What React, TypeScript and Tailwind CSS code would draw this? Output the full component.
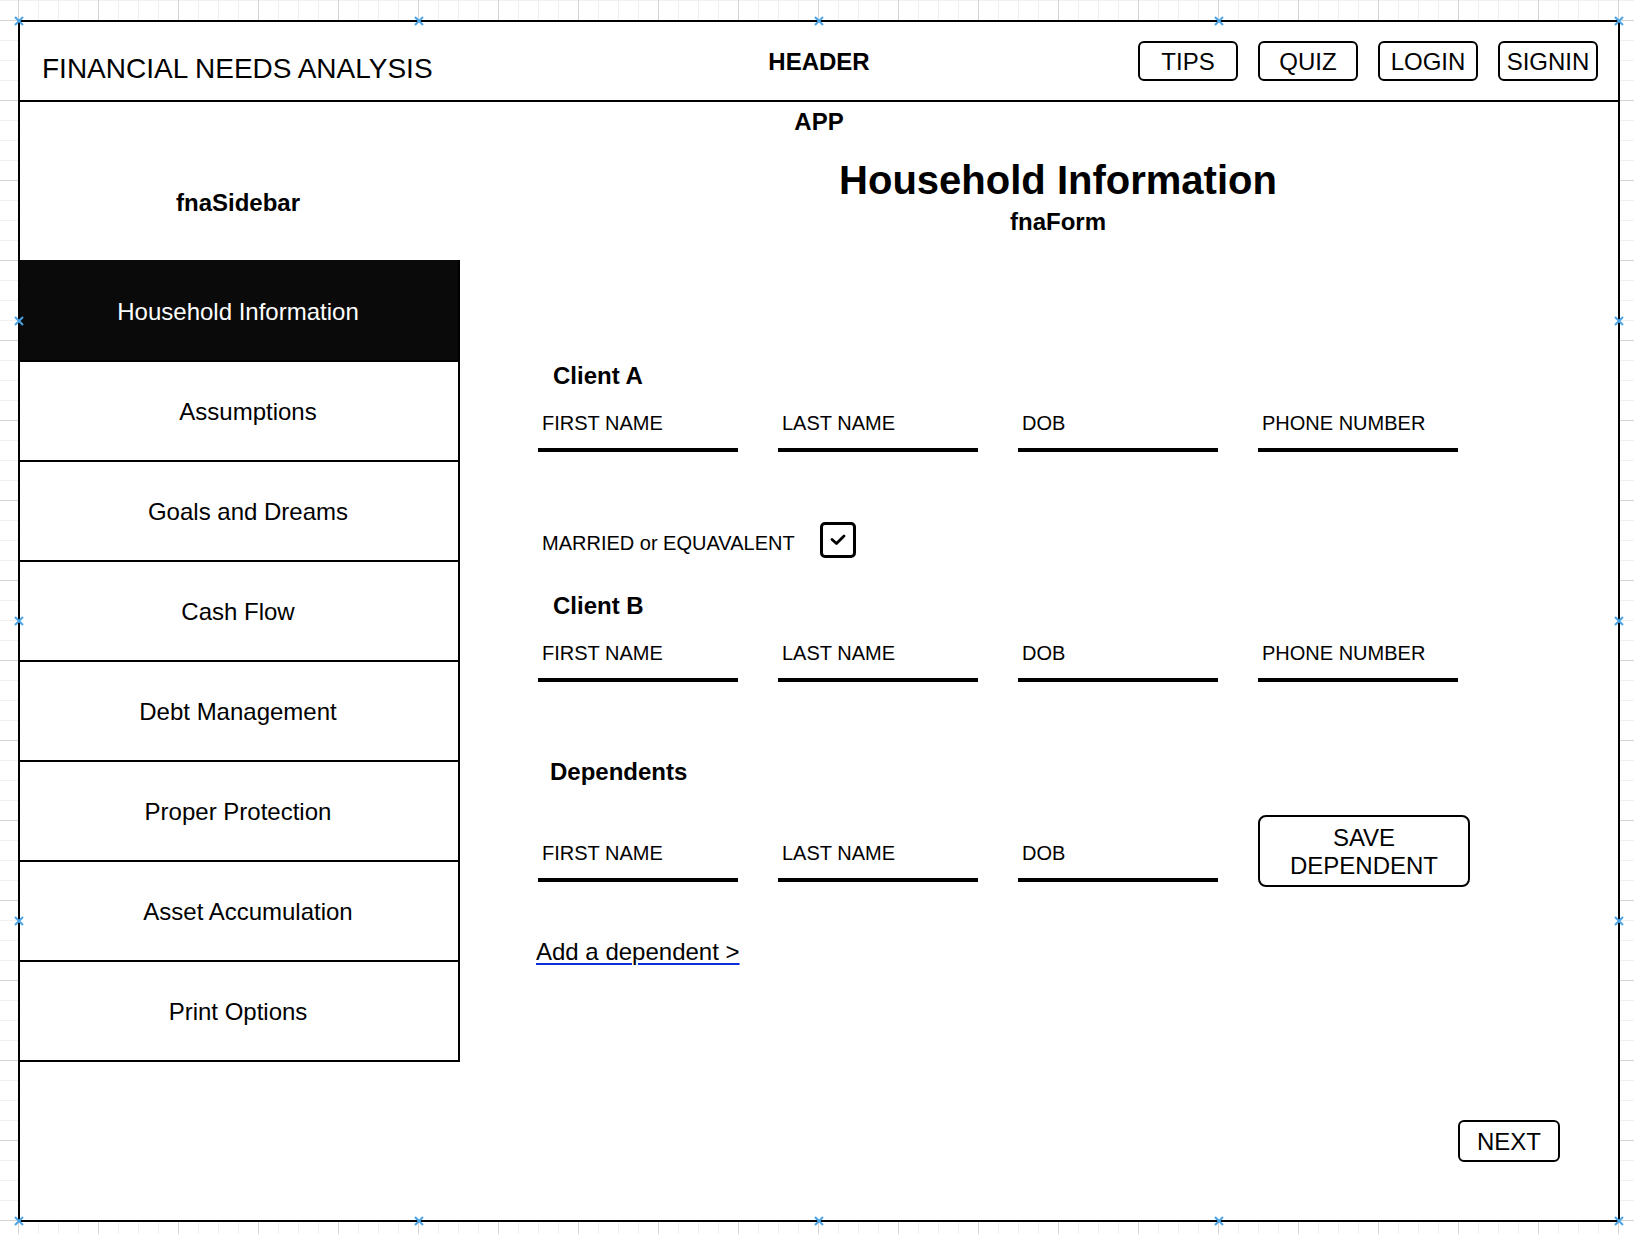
import React, { FC } from 'react';

const NAV_ITEMS = [
  { label: 'Household Information', active: true },
  { label: 'Assumptions', shift: true },
  { label: 'Goals and Dreams', shift: true },
  { label: 'Cash Flow' },
  { label: 'Debt Management' },
  { label: 'Proper Protection' },
  { label: 'Asset Accumulation', shift: true },
  { label: 'Print Options' },
];

const MARK_X = [-1, 399, 799, 1199, 1599];
const MARK_Y = [-1, 299, 599, 899, 1199];

// draw.io style connection markers around the frame
const markers: { x: number; y: number }[] = [];
MARK_X.forEach((x) => {
  markers.push({ x, y: -1 });
  markers.push({ x, y: 1199 });
});
MARK_Y.slice(1, 4).forEach((y) => {
  markers.push({ x: -1, y });
  markers.push({ x: 1599, y });
});

const Marker: FC<{ x: number; y: number }> = ({ x, y }) => (
  <svg
    className="absolute pointer-events-none"
    style={{ left: x - 5, top: y - 5 }}
    width="10"
    height="10"
    viewBox="0 0 10 10"
  >
    <path d="M1 1L9 9M9 1L1 9" stroke="#4ba3e3" strokeWidth="2" />
  </svg>
);

const Field: FC<{ label: string }> = ({ label }) => (
  <div className="w-[200px] border-b-4 border-black pb-[13px] pl-[4px]">
    <div className="text-[20px] leading-[24px]">{label}</div>
  </div>
);

const FieldRow: FC<{ labels: string[] }> = ({ labels }) => (
  <div className="flex gap-[40px]">
    {labels.map((l) => (
      <Field key={l} label={l} />
    ))}
  </div>
);

const HeaderButton: FC<{ label: string }> = ({ label }) => (
  <button className="w-[100px] h-[40px] border-2 border-black rounded-[6px] text-[24px] leading-none flex items-center justify-center pt-[2px]">
    {label}
  </button>
);

const App: FC = () => {
  return (
    <div className="min-h-screen w-full pt-[20px] pl-[18px] pb-[12px] bg-white bg-[linear-gradient(to_right,#d4d4d4_1px,transparent_1px),linear-gradient(to_bottom,#d4d4d4_1px,transparent_1px),linear-gradient(to_right,#f0f0f0_1px,transparent_1px),linear-gradient(to_bottom,#f0f0f0_1px,transparent_1px)] bg-[size:80px_80px,80px_80px,20px_20px,20px_20px] bg-[position:18px_20px,18px_20px,18px_20px,18px_20px] font-['Liberation_Sans',Arial,Helvetica,sans-serif] text-black">
      <div className="relative w-[1602px] h-[1202px] border-2 border-black bg-white flex flex-col">
        {/* header */}
        <div className="h-[80px] shrink-0 border-b-2 border-black grid grid-cols-[1fr_auto_1fr] items-center">
          <div className="pl-[22px] mt-[16px] text-[28px] leading-[32px]">FINANCIAL NEEDS ANALYSIS</div>
          <div className="mt-[2px] text-[24px] leading-[28px] font-bold">HEADER</div>
          <div className="flex justify-end gap-[20px] pr-[20px]">
            <HeaderButton label="TIPS" />
            <HeaderButton label="QUIZ" />
            <HeaderButton label="LOGIN" />
            <HeaderButton label="SIGNIN" />
          </div>
        </div>

        <div className="h-[40px] shrink-0 flex items-center justify-center text-[24px] font-bold">APP</div>

        <div className="flex flex-1">
          {/* sidebar */}
          <div className="w-[440px] shrink-0">
            <div className="h-[118px] flex items-center justify-center pt-[4px] pr-[4px] text-[24px] font-bold">
              fnaSidebar
            </div>
            <div className="border-r-2 border-b-2 border-black">
              {NAV_ITEMS.map((item) => (
                <div
                  key={item.label}
                  className={
                    item.active
                      ? 'h-[100px] bg-[#0a0a0a] text-white flex items-center justify-center pt-[3px] pr-[2px] text-[24px]'
                      : `h-[100px] flex items-center justify-center pt-[2px] text-[24px] border-t-2 border-black ${
                          item.shift ? 'pl-[18px]' : 'pr-[2px]'
                        }`
                  }
                >
                  {item.label}
                </div>
              ))}
            </div>
          </div>

          {/* form */}
          <div className="flex-1 flex flex-col">
            <h1 className="mt-[14px] pl-[38px] text-center text-[40px] leading-[48px] font-bold">
              Household Information
            </h1>
            <div className="mt-[4px] pl-[38px] text-center text-[24px] leading-[28px] font-bold">fnaForm</div>

            <div className="mt-[126px] ml-[93px] text-[24px] leading-[28px] font-bold">Client A</div>
            <div className="mt-[21px] ml-[78px]">
              <FieldRow labels={['FIRST NAME', 'LAST NAME', 'DOB', 'PHONE NUMBER']} />
            </div>

            <div className="mt-[70px] ml-[78px] flex items-start">
              <div className="w-[282px] pl-[4px] mt-[9px] text-[20px] leading-[24px]">MARRIED or EQUAVALENT</div>
              <div className="w-[36px] h-[36px] border-[3px] border-black rounded-[5px] flex items-center justify-center">
                <svg width="18" height="14" viewBox="0 0 18 14" fill="none">
                  <path d="M3 6.5L7.5 10.5L15 3" stroke="black" strokeWidth="2.8" strokeLinecap="round" strokeLinejoin="round" />
                </svg>
              </div>
            </div>

            <div className="mt-[34px] ml-[93px] text-[24px] leading-[28px] font-bold">Client B</div>
            <div className="mt-[21px] ml-[78px]">
              <FieldRow labels={['FIRST NAME', 'LAST NAME', 'DOB', 'PHONE NUMBER']} />
            </div>

            <div className="mt-[76px] ml-[90px] text-[24px] leading-[28px] font-bold">Dependents</div>
            <div className="mt-[29px] ml-[78px] flex items-start gap-[40px]">
              <div className="mt-[26px]">
                <Field label="FIRST NAME" />
              </div>
              <div className="mt-[26px]">
                <Field label="LAST NAME" />
              </div>
              <div className="mt-[26px]">
                <Field label="DOB" />
              </div>
              <button className="w-[212px] h-[72px] border-2 border-black rounded-[8px] pt-[2px] text-[24px] leading-[28px] text-center">
                SAVE
                <br />
                DEPENDENT
              </button>
            </div>

            <a
              href="#"
              className="mt-[51px] ml-[76px] self-start text-[24px] leading-[28px] underline decoration-[#0b2fd6] decoration-2 underline-offset-[3px]"
            >
              Add a dependent &gt;
            </a>

            <div className="mt-[154px] ml-[998px]">
              <button className="w-[102px] h-[42px] border-2 border-black rounded-[6px] pt-[2px] text-[24px] leading-none flex items-center justify-center">
                NEXT
              </button>
            </div>
          </div>
        </div>

        {markers.map((m) => (
          <Marker key={`${m.x}-${m.y}`} x={m.x} y={m.y} />
        ))}
      </div>
    </div>
  );
};

export default App;
